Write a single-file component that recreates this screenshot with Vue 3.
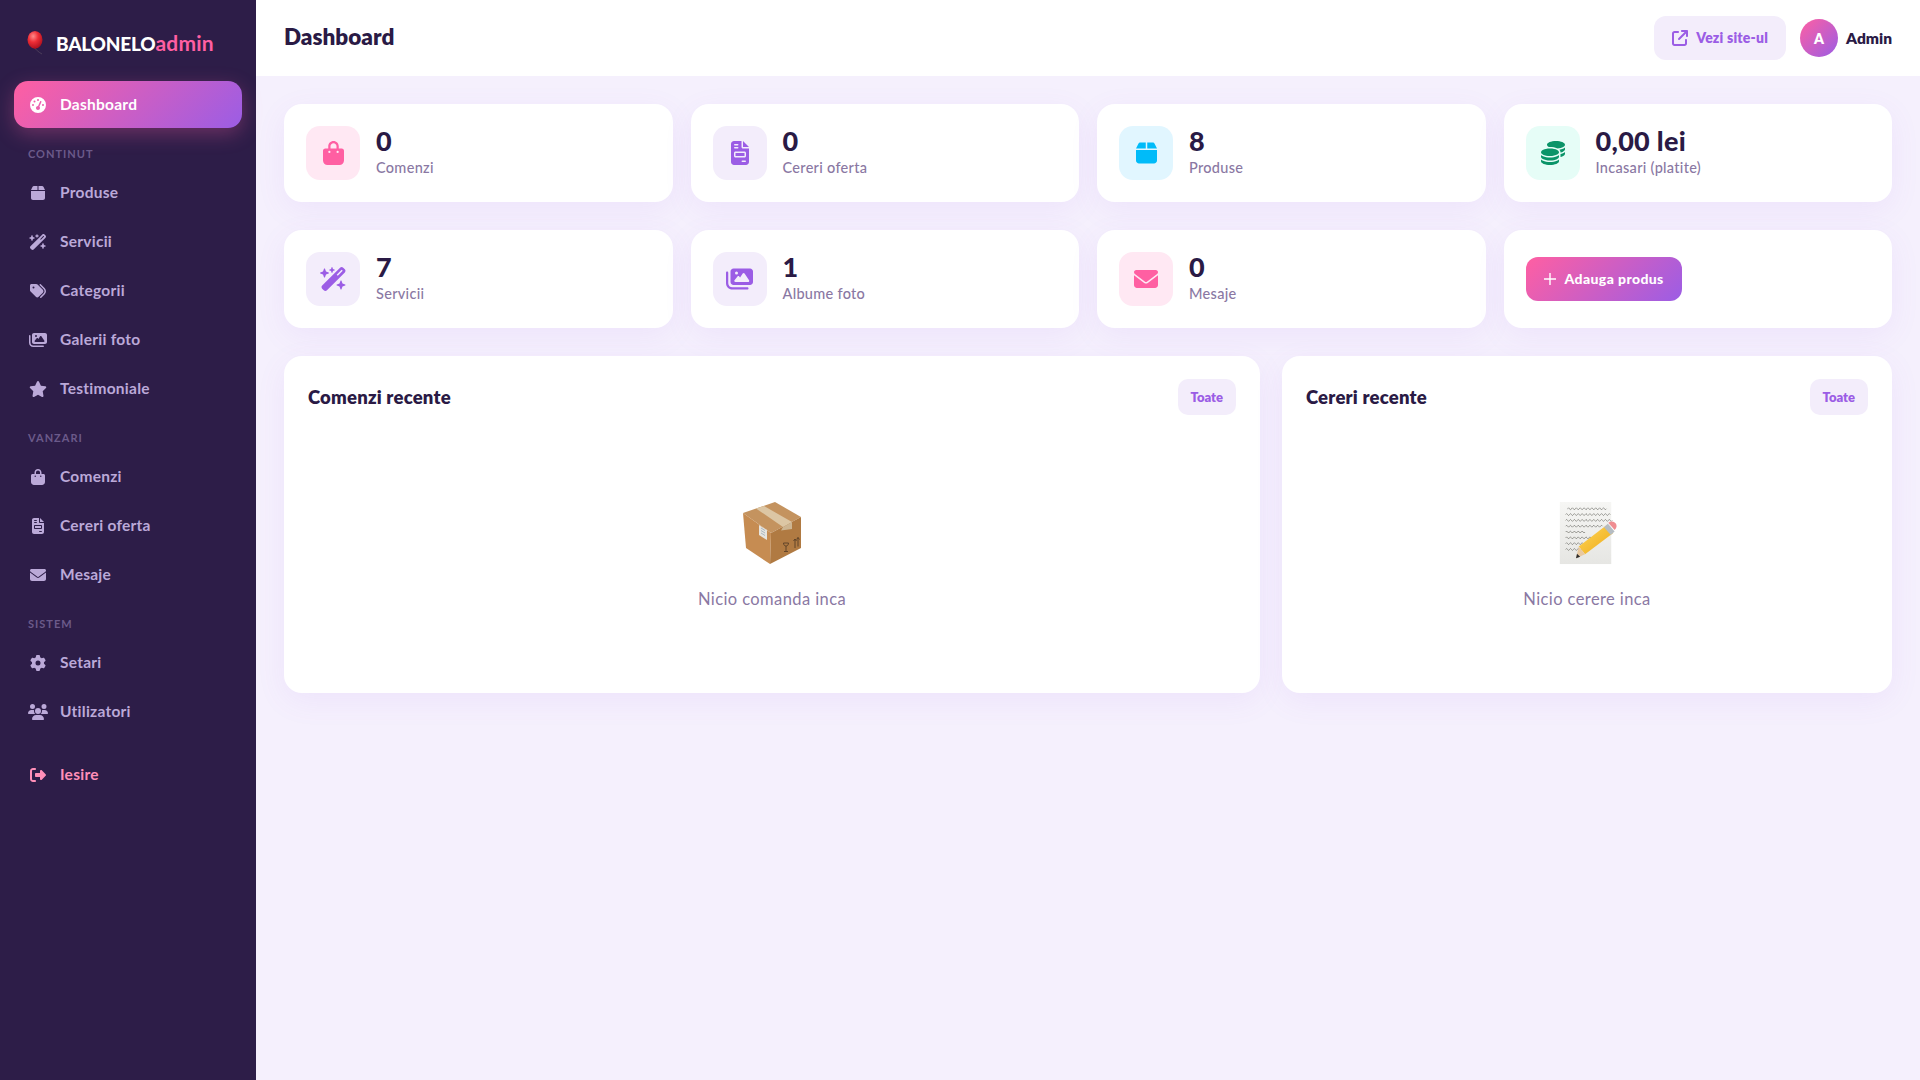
<template>
  <div class="layout">
    <aside class="sidebar">
      <div class="brand">
        <svg class="balloon" viewBox="0 0 20 24" width="20" height="24">
          <defs>
            <radialGradient id="balloonFill" cx="0.38" cy="0.3" r="0.75">
              <stop offset="0" stop-color="#ff8a8a" />
              <stop offset="0.45" stop-color="#ee2d36" />
              <stop offset="1" stop-color="#a80f1e" />
            </radialGradient>
          </defs>
          <path d="M9 17.5c2 1.500 3 3.500 7 5.500" fill="none" stroke="#54465f" stroke-width="0.8" />
          <ellipse cx="9" cy="8.800" rx="7.500" ry="8.800" fill="url(#balloonFill)" />
          <path d="M7.600 17.600h2.800l-1.400-1.800z" fill="#b8141f" />
        </svg>
        <span class="brand-name">BALONELO<span class="brand-accent">admin</span></span>
      </div>

      <nav class="nav">
        <a class="nav-item active">
          <svg class="nav-icon" :viewBox="icons.gauge.box"><path :d="icons.gauge.d" /></svg>
          <span>Dashboard</span>
        </a>

        <template v-for="section in sections" :key="section.title">
          <div class="nav-label">{{ section.title }}</div>
          <a v-for="item in section.items" :key="item.label" class="nav-item">
            <svg class="nav-icon" :viewBox="icons[item.icon].box"><path :d="icons[item.icon].d" /></svg>
            <span>{{ item.label }}</span>
          </a>
        </template>

        <a class="nav-item logout">
          <svg class="nav-icon" :viewBox="icons.logout.box"><path :d="icons.logout.d" /></svg>
          <span>Iesire</span>
        </a>
      </nav>
    </aside>

    <div class="content">
      <header class="topbar">
        <h1>Dashboard</h1>
        <div class="top-actions">
          <a class="site-link">
            <svg :viewBox="icons.external.box"><path :d="icons.external.d" /></svg>
            <span>Vezi site-ul</span>
          </a>
          <div class="avatar">A</div>
          <span class="admin-name">Admin</span>
        </div>
      </header>

      <main class="main">
        <div class="stats">
          <div v-for="stat in stats" :key="stat.label" class="stat-card">
            <div class="stat-icon" :class="stat.tone">
              <svg :viewBox="icons[stat.icon].box"><path :d="icons[stat.icon].d" /></svg>
            </div>
            <div class="stat-text">
              <div class="stat-value">{{ stat.value }}</div>
              <div class="stat-label">{{ stat.label }}</div>
            </div>
          </div>
          <div class="stat-card">
            <a class="add-btn">
              <svg viewBox="0 0 12 12" width="12" height="12">
                <path d="M6 0v12M0 6h12" fill="none" stroke="#fff" stroke-width="1.400" />
              </svg>
              <span>Adauga produs</span>
            </a>
          </div>
        </div>

        <div class="panels">
          <section class="panel">
            <div class="panel-head">
              <h2>Comenzi recente</h2>
              <a class="all-btn"><span>Toate</span></a>
            </div>
            <div class="empty">
              <svg class="emoji" viewBox="40 20 64 66">
                <polygon points="43,33 75,22 101,37 71,53" fill="#c4935f" />
                <polygon points="43,33 71,53 70,84 46,68" fill="#c68c52" />
                <polygon points="71,53 101,37 101,68 70,84" fill="#b07a42" />
                <polygon points="56,28.500 64,26 92,42 83,47" fill="#dcc6a4" />
                <polygon points="83,47 92,42 92,49 81,50.500" fill="#cdb592" />
                <polygon points="59,45 67,50 67,60 59,55" fill="#e6e4df" />
                <path d="M61 48l4 2.500M61 50.500l4 2.500M61 53l4 2.500" stroke="#8fa3b5" stroke-width="0.700" />
                <path d="M86 66v5M83.500 63c0 4 5 4 5 0zM84 71.500h4M95 59v9M98 57.500v9M93.500 61l1.500-2 1.500 2M96.500 59.500l1.500-2 1.500 2" fill="none" stroke="#5a3f27" stroke-width="0.900" />
              </svg>
              <p>Nicio comanda inca</p>
            </div>
          </section>

          <section class="panel">
            <div class="panel-head">
              <h2>Cereri recente</h2>
              <a class="all-btn"><span>Toate</span></a>
            </div>
            <div class="empty">
              <svg class="emoji" viewBox="0 0 66 66">
                <defs>
                  <linearGradient id="paperFill" x1="0" y1="0" x2="0" y2="1">
                    <stop offset="0" stop-color="#f6f6f4" />
                    <stop offset="1" stop-color="#e6e6e3" />
                  </linearGradient>
                  <linearGradient id="pencilFill" x1="0" y1="0" x2="1" y2="1">
                    <stop offset="0" stop-color="#ffd75a" />
                    <stop offset="1" stop-color="#eda916" />
                  </linearGradient>
                </defs>
                <rect x="5" y="1" width="53" height="64" fill="url(#paperFill)" />
                <path :d="scribble" fill="none" stroke="#57574f" stroke-width="0.600" />
                <polygon points="24.500,47 53,25 60,33 31,55" fill="url(#pencilFill)" />
                <polygon points="21.700,59 24.500,47 31,55" fill="#e9c9a0" />
                <polygon points="21.700,59 22.700,54.500 26,57.500" fill="#2c2c2c" />
                <polygon points="50.500,27 54.500,23.500 61.500,31.500 57.500,35" fill="#b5bcc2" />
                <path d="M55 22.500c3-2.500 6-1.500 7.500 .5s1.500 4.500-1 7z" fill="#ef8d91" />
              </svg>
              <p>Nicio cerere inca</p>
            </div>
          </section>
        </div>
      </main>
    </div>
  </div>
</template>

<script setup>
const icons = {
  gauge: { box: '0 0 512 512', d: 'M0 256a256 256 0 1 1 512 0A256 256 0 1 1 0 256zM288 96a32 32 0 1 0 -64 0 32 32 0 1 0 64 0zM256 416c35.3 0 64-28.7 64-64c0-17.4-6.9-33.1-18.1-44.6L366 161.7c5.3-12.1-.2-26.3-12.3-31.6s-26.3 .2-31.6 12.3L257.9 288c-.6 0-1.3 0-1.9 0c-35.3 0-64 28.7-64 64s28.7 64 64 64zM176 144a32 32 0 1 0 -64 0 32 32 0 1 0 64 0zM96 288a32 32 0 1 0 0-64 32 32 0 1 0 0 64zm352-32a32 32 0 1 0 -64 0 32 32 0 1 0 64 0z' },
  box: { box: '0 0 448 512', d: 'M50.7 58.5L0 160H208V32H93.7C75.5 32 58.9 42.3 50.7 58.5zM240 160H448L397.3 58.5C389.1 42.3 372.5 32 354.3 32H240V160zm208 32H0V416c0 35.3 28.7 64 64 64H384c35.3 0 64-28.7 64-64V192z' },
  wand: { box: '0 0 576 512', d: 'M234.7 42.7L197 56.8c-3 1.1-5 4-5 7.2s2 6.1 5 7.2l37.7 14.1L248.8 123c1.1 3 4 5 7.2 5s6.1-2 7.2-5l14.1-37.7L315 71.2c3-1.1 5-4 5-7.2s-2-6.1-5-7.2L277.3 42.7 263.2 5c-1.1-3-4-5-7.2-5s-6.1 2-7.2 5L234.7 42.7zM46.1 395.4c-18.7 18.7-18.7 49.1 0 67.9l34.6 34.6c18.7 18.7 49.1 18.7 67.9 0L529.9 116.5c18.7-18.7 18.7-49.1 0-67.9L495.3 14.1c-18.7-18.7-49.1-18.7-67.9 0L46.1 395.4zM484.6 82.6l-105 105-23.3-23.3 105-105 23.3 23.3zM7.5 117.2C3 118.9 0 123.2 0 128s3 9.1 7.5 10.8L64 160l21.2 56.5c1.7 4.5 6 7.5 10.8 7.5s9.1-3 10.8-7.5L128 160l56.5-21.2c4.5-1.7 7.5-6 7.5-10.8s-3-9.1-7.5-10.8L128 96 106.8 39.5C105.1 35 100.8 32 96 32s-9.1 3-10.8 7.5L64 96 7.5 117.2zm352 256c-4.5 1.7-7.5 6-7.5 10.8s3 9.1 7.5 10.8L416 416l21.2 56.5c1.7 4.5 6 7.5 10.8 7.5s9.1-3 10.8-7.5L480 416l56.5-21.2c4.5-1.7 7.5-6 7.5-10.8s-3-9.1-7.5-10.8L480 352l-21.2-56.5c-1.7-4.5-6-7.5-10.8-7.5s-9.1 3-10.8 7.5L416 352l-56.5 21.2z' },
  tags: { box: '0 0 512 512', d: 'M345 39.1L472.8 168.4c52.4 53 52.4 138.2 0 191.2L360.8 472.9c-9.3 9.4-24.5 9.5-33.9 .2s-9.5-24.5-.2-33.9L438.6 325.9c33.9-34.3 33.9-89.4 0-123.7L310.9 72.9c-9.3-9.4-9.2-24.6 .2-33.9s24.6-9.2 33.9 .2zM0 229.5V80C0 53.5 21.5 32 48 32H197.5c17 0 33.3 6.7 45.3 18.7l168 168c25 25 25 65.5 0 90.5L277.3 442.7c-25 25-65.5 25-90.5 0l-168-168C6.7 262.7 0 246.5 0 229.5zM144 144a32 32 0 1 0 -64 0 32 32 0 1 0 64 0z' },
  images: { box: '0 0 576 512', d: 'M160 32c-35.3 0-64 28.7-64 64V320c0 35.3 28.7 64 64 64H512c35.3 0 64-28.7 64-64V96c0-35.3-28.7-64-64-64H160zM396 138.7l96 144c4.9 7.4 5.4 16.8 1.2 24.6S480.9 320 472 320H328 280 200c-9.2 0-17.6-5.3-21.6-13.6s-2.9-18.2 2.9-25.4l64-80c4.6-5.7 11.4-9 18.7-9s14.2 3.3 18.7 9l17.3 21.6 56-84C360.5 132 368 128 376 128s15.5 4 20 10.7zM192 128a32 32 0 1 1 64 0 32 32 0 1 1 -64 0zM48 120c0-13.3-10.7-24-24-24S0 106.7 0 120V344c0 75.1 60.9 136 136 136H456c13.3 0 24-10.7 24-24s-10.7-24-24-24H136c-48.6 0-88-39.4-88-88V120z' },
  star: { box: '0 0 576 512', d: 'M316.9 18C311.6 7 300.4 0 288.1 0s-23.4 7-28.8 18L195 150.3 51.4 171.5c-12 1.8-22 10.2-25.7 21.7s-.7 24.2 7.9 32.7L137.8 329 113.2 474.7c-2 12 3 24.2 12.9 31.3s23 8 33.8 2.3l128.3-68.5 128.3 68.5c10.8 5.7 23.9 4.9 33.8-2.3s14.9-19.3 12.9-31.3L438.5 329 542.7 225.9c8.6-8.5 11.7-21.2 7.9-32.7s-13.7-19.9-25.7-21.7L381.2 150.3 316.9 18z' },
  bag: { box: '0 0 448 512', d: 'M160 112c0-35.3 28.7-64 64-64s64 28.7 64 64v48H160V112zm-48 48H48c-26.5 0-48 21.5-48 48V416c0 53 43 96 96 96H352c53 0 96-43 96-96V208c0-26.5-21.5-48-48-48H336V112C336 50.1 285.9 0 224 0S112 50.1 112 112v48zm24 48a24 24 0 1 1 0 48 24 24 0 1 1 0-48zm152 24a24 24 0 1 1 48 0 24 24 0 1 1 -48 0z' },
  invoice: { box: '0 0 384 512', d: 'M64 0C28.7 0 0 28.7 0 64V448c0 35.3 28.7 64 64 64H320c35.3 0 64-28.7 64-64V160H256c-17.7 0-32-14.3-32-32V0H64zM256 0V128H384L256 0zM80 64h64c8.8 0 16 7.2 16 16s-7.2 16-16 16H80c-8.8 0-16-7.2-16-16s7.2-16 16-16zm0 64h64c8.8 0 16 7.2 16 16s-7.2 16-16 16H80c-8.8 0-16-7.2-16-16s7.2-16 16-16zm16 96H288c17.7 0 32 14.3 32 32v64c0 17.7-14.3 32-32 32H96c-17.7 0-32-14.3-32-32V256c0-17.7 14.3-32 32-32zm0 32v64H288V256H96zM240 416h64c8.8 0 16 7.2 16 16s-7.2 16-16 16H240c-8.8 0-16-7.2-16-16s7.2-16 16-16z' },
  envelope: { box: '0 0 512 512', d: 'M48 64C21.5 64 0 85.5 0 112c0 15.1 7.1 29.3 19.2 38.4L236.8 313.6c11.4 8.5 27 8.5 38.4 0L492.8 150.4c12.1-9.1 19.2-23.3 19.2-38.4c0-26.5-21.5-48-48-48H48zM0 176V384c0 35.3 28.7 64 64 64H448c35.3 0 64-28.7 64-64V176L294.4 339.2c-22.8 17.1-54 17.1-76.8 0L0 176z' },
  gear: { box: '0 0 512 512', d: 'M495.9 166.6c3.2 8.7 .5 18.4-6.4 24.6l-43.3 39.4c1.1 8.3 1.7 16.8 1.7 25.4s-.6 17.1-1.7 25.4l43.3 39.4c6.9 6.2 9.6 15.9 6.4 24.6c-4.4 11.9-9.7 23.3-15.8 34.3l-4.7 8.1c-6.6 11-14 21.4-22.1 31.2c-5.9 7.2-15.7 9.6-24.5 6.8l-55.7-17.7c-13.4 10.3-28.2 18.9-44 25.4l-12.5 57.1c-2 9.1-9 16.3-18.2 17.8c-13.8 2.3-28 3.5-42.5 3.5s-28.7-1.2-42.5-3.5c-9.2-1.5-16.2-8.7-18.2-17.8l-12.5-57.1c-15.8-6.5-30.6-15.1-44-25.4L83.1 425.9c-8.8 2.8-18.6 .3-24.5-6.8c-8.1-9.8-15.5-20.2-22.1-31.2l-4.7-8.1c-6.1-11-11.4-22.4-15.8-34.3c-3.2-8.7-.5-18.4 6.4-24.6l43.3-39.4C64.6 273.1 64 264.6 64 256s.6-17.1 1.7-25.4L22.4 191.2c-6.9-6.2-9.6-15.9-6.4-24.6c4.4-11.9 9.7-23.3 15.8-34.3l4.7-8.1c6.6-11 14-21.4 22.1-31.2c5.9-7.2 15.7-9.6 24.5-6.8l55.7 17.7c13.4-10.3 28.2-18.9 44-25.4l12.5-57.1c2-9.1 9-16.3 18.2-17.8C227.3 1.2 241.5 0 256 0s28.7 1.2 42.5 3.5c9.2 1.5 16.2 8.7 18.2 17.8l12.5 57.1c15.8 6.5 30.6 15.1 44 25.4l55.7-17.7c8.8-2.8 18.6-.3 24.5 6.8c8.1 9.8 15.5 20.2 22.1 31.2l4.7 8.1c6.1 11 11.4 22.4 15.8 34.3zM256 336a80 80 0 1 0 0-160 80 80 0 1 0 0 160z' },
  users: { box: '0 0 640 512', d: 'M144 0a80 80 0 1 1 0 160A80 80 0 1 1 144 0zM512 0a80 80 0 1 1 0 160A80 80 0 1 1 512 0zM0 298.7C0 239.8 47.8 192 106.7 192h42.7c15.9 0 31 3.5 44.6 9.7c-1.3 7.2-1.9 14.7-1.9 22.3c0 38.2 16.8 72.5 43.3 96c-.2 0-.4 0-.7 0H21.3C9.6 320 0 310.4 0 298.7zM405.3 320c-.2 0-.4 0-.7 0c26.6-23.5 43.3-57.8 43.3-96c0-7.6-.7-15-1.9-22.3c13.6-6.3 28.7-9.7 44.6-9.7h42.7C592.2 192 640 239.8 640 298.7c0 11.8-9.6 21.3-21.3 21.3H405.3zM224 224a96 96 0 1 1 192 0 96 96 0 1 1 -192 0zM128 485.3C128 411.7 187.7 352 261.3 352H378.7C452.3 352 512 411.7 512 485.3c0 14.7-11.9 26.7-26.7 26.7H154.7c-14.7 0-26.7-11.9-26.7-26.7z' },
  logout: { box: '0 0 512 512', d: 'M377.9 105.9L500.7 228.7c7.2 7.2 11.3 17.1 11.3 27.3s-4.1 20.1-11.3 27.3L377.9 406.1c-6.4 6.4-15 9.9-24 9.9c-18.7 0-33.9-15.2-33.9-33.9l0-62.1-128 0c-17.7 0-32-14.3-32-32l0-64c0-17.7 14.3-32 32-32l128 0 0-62.1c0-18.7 15.2-33.9 33.9-33.9c9 0 17.6 3.6 24 9.9zM160 96L96 96c-17.7 0-32 14.3-32 32l0 256c0 17.7 14.3 32 32 32l64 0c17.7 0 32 14.3 32 32s-14.3 32-32 32l-64 0c-53 0-96-43-96-96L0 128C0 75 43 32 96 32l64 0c17.7 0 32 14.3 32 32s-14.3 32-32 32z' },
  coins: { box: '0 0 512 512', d: 'M512 80c0 18-14.3 34.6-38.4 48c-29.1 16.1-72.5 27.5-122.3 30.9c-3.7-1.8-7.4-3.5-11.3-5C300.6 137.4 248.2 128 192 128c-8.3 0-16.4 .2-24.5 .6l-1.1-.6C142.3 114.6 128 98 128 80c0-44.2 86-80 192-80S512 35.8 512 80zM160.7 161.1c10.2-.7 20.7-1.1 31.3-1.1c62.2 0 117.4 12.3 152.5 31.4C369.3 204.9 384 221.7 384 240c0 4-.7 7.9-2.1 11.7c-4.6 13.2-17 25.3-35 35.5c0 0 0 0 0 0c-.1 .1-.3 .1-.4 .2l0 0 0 0c-.3 .2-.6 .3-.9 .5c-35 19.4-90.8 32-153.6 32c-59.6 0-112.9-11.3-148.2-29.1c-1.9-.9-3.7-1.9-5.5-2.9C14.3 274.6 0 258 0 240c0-34.8 53.4-64.5 128-75.4c10.5-1.5 21.4-2.7 32.7-3.5zM416 240c0-21.9-10.6-39.9-24.1-53.4c28.3-4.4 54.2-11.4 76.2-20.5c16.3-6.8 31.5-15.2 43.9-25.5V176c0 19.3-16.5 37.1-43.8 50.9c-14.6 7.4-32.4 13.7-52.4 18.5c.1-1.8 .2-3.5 .2-5.3zm-32 96c0 18-14.3 34.6-38.4 48c-1.8 1-3.6 1.9-5.5 2.9C304.9 404.7 251.6 416 192 416c-62.8 0-118.6-12.6-153.6-32C14.3 370.6 0 354 0 336V300.6c12.5 10.3 27.6 18.7 43.9 25.5C83.4 342.6 135.8 352 192 352s108.6-9.4 148.1-25.9c7.8-3.2 15.3-6.9 22.4-10.9c6.1-3.4 11.8-7.2 17.2-11.2c1.5-1.1 2.9-2.3 4.3-3.4V304v5.7V336zm32 0V304 278.1c19-4.2 36.5-9.5 52.1-16c16.3-6.8 31.5-15.2 43.9-25.5V272c0 10.5-5 21-14.9 30.9c-16.3 16.3-45 29.7-81.3 38.4c.1-1.7 .2-3.5 .2-5.3zM192 448c56.2 0 108.6-9.4 148.1-25.9c16.3-6.8 31.5-15.2 43.9-25.5V432c0 44.2-86 80-192 80S0 476.2 0 432V396.6c12.5 10.3 27.6 18.7 43.9 25.5C83.4 438.6 135.8 448 192 448z' },
  external: { box: '0 0 512 512', d: 'M320 0c-17.7 0-32 14.3-32 32s14.3 32 32 32h82.7L201.4 265.4c-12.5 12.5-12.5 32.8 0 45.3s32.8 12.5 45.3 0L448 109.3V192c0 17.7 14.3 32 32 32s32-14.3 32-32V32c0-17.7-14.3-32-32-32H320zM80 32C35.8 32 0 67.8 0 112V432c0 44.2 35.8 80 80 80H400c44.2 0 80-35.8 80-80V320c0-17.7-14.3-32-32-32s-32 14.3-32 32V432c0 8.8-7.2 16-16 16H80c-8.8 0-16-7.2-16-16V112c0-8.8 7.2-16 16-16H192c17.7 0 32-14.3 32-32s-14.3-32-32-32H80z' }
}

const sections = [
  {
    title: 'CONTINUT',
    items: [
      { label: 'Produse', icon: 'box' },
      { label: 'Servicii', icon: 'wand' },
      { label: 'Categorii', icon: 'tags' },
      { label: 'Galerii foto', icon: 'images' },
      { label: 'Testimoniale', icon: 'star' }
    ]
  },
  {
    title: 'VANZARI',
    items: [
      { label: 'Comenzi', icon: 'bag' },
      { label: 'Cereri oferta', icon: 'invoice' },
      { label: 'Mesaje', icon: 'envelope' }
    ]
  },
  {
    title: 'SISTEM',
    items: [
      { label: 'Setari', icon: 'gear' },
      { label: 'Utilizatori', icon: 'users' }
    ]
  }
]

const stats = [
  { value: '0', label: 'Comenzi', icon: 'bag', tone: 'pink' },
  { value: '0', label: 'Cereri oferta', icon: 'invoice', tone: 'purple' },
  { value: '8', label: 'Produse', icon: 'box', tone: 'blue' },
  { value: '0,00 lei', label: 'Incasari (platite)', icon: 'coins', tone: 'green' },
  { value: '7', label: 'Servicii', icon: 'wand', tone: 'purple' },
  { value: '1', label: 'Albume foto', icon: 'images', tone: 'purple' },
  { value: '0', label: 'Mesaje', icon: 'envelope', tone: 'pink' }
]

// the handwriting on the memo emoji: wavy lines of varying length
const scribbleLines = [[13, 8, 40], [11, 14, 46], [11, 20, 48], [11, 26, 38], [11, 32, 20], [11, 38, 30], [11, 44, 26], [11, 50, 20]]
const scribble = scribbleLines.map(([x, y, len]) => {
  let d = `M${x} ${y}`
  for (let i = 0; i < len / 2; i++) {
    d += i % 2 ? 'q1 2 2 0' : 'q1 -2 2 0'
  }
  return d
}).join('')
</script>

<style>
body {
  background: #f5f0fd;
}
</style>

<style scoped>
.layout {
  display: flex;
  min-height: 100vh;
  font-family: "Lato", "Liberation Sans", sans-serif;
  color: #2a1a45;
}

.sidebar {
  width: 256px;
  flex-shrink: 0;
  background: #2d1d48;
}

.brand {
  display: flex;
  align-items: center;
  gap: 10px;
  height: 81px;
  padding: 4px 0 0 26px;
  box-sizing: border-box;
}

.balloon {
  flex-shrink: 0;
}

.brand-name {
  font-size: 19px;
  font-weight: 900;
  letter-spacing: -0.2px;
  color: #fff;
  line-height: 1;
}

.brand-accent {
  color: #ff5fa2;
  font-size: 21px;
  font-weight: 700;
  letter-spacing: 0.15px;
}

.nav {
  padding: 0 14px;
  display: flex;
  flex-direction: column;
  gap: 2px;
}

.nav-item {
  display: flex;
  align-items: center;
  gap: 12px;
  height: 47px;
  padding-left: 14px;
  border-radius: 14px;
  font-size: 15.500px;
  font-weight: 700;
  letter-spacing: 0.25px;
  color: #bba9d8;
}

.nav-item span {
  margin-bottom: 2px;
}

.nav-item.active {
  background: linear-gradient(135deg, #ff5fa2, #9b5de5);
  color: #fff;
  box-shadow: 0 6px 20px rgba(255, 95, 162, 0.3);
}

.nav-item.logout {
  color: #ff8fb8;
  margin-top: 14px;
}

.nav-icon {
  width: 20px;
  height: 16px;
  flex-shrink: 0;
  fill: currentColor;
}

.nav-label {
  font-size: 11px;
  font-weight: 700;
  letter-spacing: 1px;
  color: #6b5a8a;
  padding: 0 14px;
  height: 14px;
  line-height: 14px;
  margin: 17px 0 6px;
}

.content {
  flex: 1;
  min-width: 0;
}

.topbar {
  height: 76px;
  background: #fff;
  display: flex;
  align-items: center;
  justify-content: space-between;
  padding: 0 28px;
}

.topbar h1 {
  margin: 0 0 3px;
  font-size: 22.500px;
  font-weight: 800;
}

.top-actions {
  display: flex;
  align-items: center;
}

.site-link {
  display: flex;
  align-items: center;
  gap: 8px;
  height: 44px;
  padding: 0 18px;
  border-radius: 12px;
  background: #f3edfb;
  color: #9b5de5;
  font-size: 14px;
  font-weight: 800;
  letter-spacing: 0.2px;
  margin-right: 14px;
}

.site-link span {
  margin-bottom: 2px;
}

.site-link svg {
  width: 16px;
  height: 16px;
  fill: currentColor;
}

.avatar {
  width: 38px;
  height: 38px;
  border-radius: 50%;
  background: linear-gradient(135deg, #ff5fa2, #9b5de5);
  color: #fff;
  display: flex;
  align-items: center;
  justify-content: center;
  font-size: 14px;
  font-weight: 800;
  margin-right: 8px;
}

.admin-name {
  font-size: 15.500px;
  font-weight: 800;
}

.main {
  padding: 28px;
}

.stats {
  display: grid;
  grid-template-columns: repeat(4, 1fr);
  column-gap: 18px;
  row-gap: 28px;
  margin-bottom: 28px;
}

.stat-card {
  display: flex;
  align-items: center;
  gap: 16px;
  height: 98px;
  padding: 0 22px;
  background: #fff;
  border-radius: 18px;
  box-shadow: 0 8px 30px rgba(155, 93, 229, 0.08);
}

.stat-icon {
  width: 54px;
  height: 54px;
  border-radius: 14px;
  display: flex;
  align-items: center;
  justify-content: center;
  flex-shrink: 0;
}

.stat-icon svg {
  height: 24px;
  max-width: 28px;
  fill: currentColor;
}

.stat-text {
  padding-bottom: 4px;
}

.pink {
  background: #ffe8f3;
  color: #ff5fa2;
}

.purple {
  background: #f3edfb;
  color: #9b5de5;
}

.blue {
  background: #e1f6ff;
  color: #00bbf9;
}

.green {
  background: #e6fdf7;
  color: #0a9468;
}

.stat-value {
  font-size: 27px;
  font-weight: 900;
  letter-spacing: 0.3px;
  line-height: 32px;
}

.stat-label {
  font-size: 14.500px;
  font-weight: 500;
  letter-spacing: 0.3px;
  color: #8a78a3;
  line-height: 21px;
}

.add-btn {
  display: flex;
  align-items: center;
  gap: 9px;
  height: 44px;
  padding: 0 18px;
  border-radius: 12px;
  background: linear-gradient(135deg, #ff5fa2, #9b5de5);
  color: #fff;
  font-size: 14px;
  font-weight: 900;
  letter-spacing: 0.4px;
}

.add-btn span {
  margin-bottom: 2px;
}

.panels {
  display: grid;
  grid-template-columns: 1.6fr 1fr;
  gap: 22px;
}

.panel {
  height: 337px;
  padding: 23px 24px 24px;
  box-sizing: border-box;
  background: #fff;
  border-radius: 18px;
  box-shadow: 0 8px 30px rgba(155, 93, 229, 0.08);
}

.panel-head {
  display: flex;
  align-items: center;
  justify-content: space-between;
  height: 36px;
}

.panel-head h2 {
  margin: 0;
  font-size: 18.500px;
  font-weight: 800;
  letter-spacing: 0.2px;
}

.all-btn {
  display: flex;
  align-items: center;
  height: 36px;
  padding: 0 13px;
  border-radius: 10px;
  background: #f3edfb;
  color: #9b5de5;
  font-size: 13px;
  font-weight: 800;
}

.all-btn span {
  margin-bottom: 1px;
}

.empty {
  display: flex;
  flex-direction: column;
  align-items: center;
  padding-top: 85px;
}

.emoji {
  width: 64px;
  height: 66px;
  display: block;
}

.empty p {
  margin: 23px 0 0;
  font-size: 16.500px;
  letter-spacing: 0.4px;
  line-height: 20px;
  color: #8a78a3;
}
</style>
